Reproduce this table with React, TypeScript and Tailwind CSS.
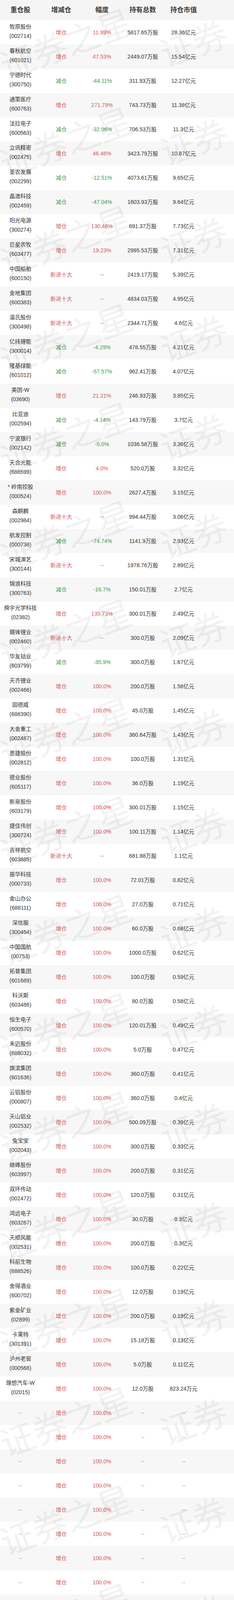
import React from 'react';

type Row = [string, string, string, string, string, string];

const rows: Row[] = [
  ['牧原股份', '002714', '增仓', '11.99%', '5817.65万股', '28.36亿元'],
  ['春秋航空', '601021', '增仓', '47.53%', '2449.07万股', '15.54亿元'],
  ['宁德时代', '300750', '减仓', '-44.11%', '311.93万股', '12.27亿元'],
  ['通策医疗', '600763', '增仓', '271.79%', '743.73万股', '11.38亿元'],
  ['法拉电子', '600563', '减仓', '-32.96%', '706.53万股', '11.3亿元'],
  ['立讯精密', '002475', '增仓', '46.46%', '3423.79万股', '10.87亿元'],
  ['圣农发展', '002299', '减仓', '-12.51%', '4073.61万股', '9.65亿元'],
  ['晶澳科技', '002459', '减仓', '-47.04%', '1603.93万股', '9.64亿元'],
  ['阳光电源', '300274', '增仓', '130.46%', '691.37万股', '7.73亿元'],
  ['巨星农牧', '603477', '增仓', '19.23%', '2995.53万股', '7.31亿元'],
  ['中国船舶', '600150', '新进十大', '--', '2419.17万股', '5.39亿元'],
  ['金地集团', '600383', '新进十大', '--', '4834.03万股', '4.95亿元'],
  ['温氏股份', '300498', '新进十大', '--', '2344.71万股', '4.6亿元'],
  ['亿纬锂能', '300014', '减仓', '-4.29%', '478.55万股', '4.21亿元'],
  ['隆基绿能', '601012', '减仓', '-57.57%', '962.41万股', '4.07亿元'],
  ['美团-W', '03690', '增仓', '21.21%', '246.93万股', '3.85亿元'],
  ['比亚迪', '002594', '减仓', '-4.14%', '143.79万股', '3.7亿元'],
  ['宁波银行', '002142', '减仓', '-5.0%', '1036.58万股', '3.36亿元'],
  ['天合光能', '688599', '增仓', '4.0%', '520.0万股', '3.32亿元'],
  ['* 岭南控股', '000524', '增仓', '100.0%', '2627.4万股', '3.15亿元'],
  ['森麒麟', '002984', '新进十大', '--', '994.44万股', '3.06亿元'],
  ['航发控制', '000738', '减仓', '-74.74%', '1141.9万股', '2.93亿元'],
  ['宋城演艺', '300144', '新进十大', '--', '1978.76万股', '2.89亿元'],
  ['锦浪科技', '300763', '减仓', '-16.7%', '150.01万股', '2.7亿元'],
  ['舜宇光学科技', '02382', '增仓', '135.73%', '300.01万股', '2.49亿元'],
  ['赣锋锂业', '002460', '新进十大', '--', '300.0万股', '2.09亿元'],
  ['华友钴业', '603799', '减仓', '-35.9%', '300.0万股', '1.67亿元'],
  ['天齐锂业', '002466', '增仓', '100.0%', '200.0万股', '1.58亿元'],
  ['固德威', '688390', '增仓', '100.0%', '45.0万股', '1.45亿元'],
  ['大金重工', '002487', '增仓', '100.0%', '360.64万股', '1.43亿元'],
  ['恩捷股份', '002812', '增仓', '100.0%', '100.0万股', '1.31亿元'],
  ['德业股份', '605117', '增仓', '100.0%', '36.0万股', '1.19亿元'],
  ['新泉股份', '603179', '增仓', '100.0%', '300.01万股', '1.15亿元'],
  ['捷佳伟创', '300724', '增仓', '100.0%', '100.11万股', '1.14亿元'],
  ['吉祥航空', '603885', '新进十大', '--', '681.88万股', '1.1亿元'],
  ['振华科技', '000733', '增仓', '100.0%', '72.01万股', '0.82亿元'],
  ['金山办公', '688111', '增仓', '100.0%', '27.0万股', '0.71亿元'],
  ['深信服', '300454', '增仓', '100.0%', '60.0万股', '0.68亿元'],
  ['中国国航', '00753', '增仓', '100.0%', '1000.0万股', '0.62亿元'],
  ['拓普集团', '601689', '增仓', '100.0%', '100.0万股', '0.59亿元'],
  ['科沃斯', '603486', '增仓', '100.0%', '80.0万股', '0.58亿元'],
  ['恒生电子', '600570', '增仓', '100.0%', '120.01万股', '0.49亿元'],
  ['禾迈股份', '688032', '增仓', '100.0%', '5.0万股', '0.47亿元'],
  ['旗滨集团', '601636', '增仓', '100.0%', '360.0万股', '0.41亿元'],
  ['云铝股份', '000807', '增仓', '100.0%', '360.0万股', '0.4亿元'],
  ['天山铝业', '002532', '增仓', '100.0%', '500.09万股', '0.39亿元'],
  ['兔宝宝', '002043', '增仓', '100.0%', '300.0万股', '0.33亿元'],
  ['继峰股份', '603997', '增仓', '100.0%', '200.0万股', '0.31亿元'],
  ['双环传动', '002472', '增仓', '100.0%', '120.0万股', '0.31亿元'],
  ['鸿远电子', '603267', '增仓', '100.0%', '30.0万股', '0.3亿元'],
  ['天顺风能', '002531', '增仓', '100.0%', '200.0万股', '0.3亿元'],
  ['科前生物', '688526', '增仓', '100.0%', '100.0万股', '0.22亿元'],
  ['舍得酒业', '600702', '增仓', '100.0%', '12.0万股', '0.19亿元'],
  ['紫金矿业', '02899', '增仓', '100.0%', '200.0万股', '0.19亿元'],
  ['卡莱特', '301391', '增仓', '100.0%', '15.18万股', '0.13亿元'],
  ['泸州老窖', '000568', '增仓', '100.0%', '5.0万股', '0.11亿元'],
  ['理想汽车-W', '02015', '增仓', '100.0%', '12.0万股', '823.24万元'],
];

// lower part of the table could not be read; keep the row rhythm with the visible action pattern
const unread: string[] = [
  ...Array.from({ length: 49 }, () => '增仓'),
  '不变',
  '不变',
  ...Array.from({ length: 6 }, () => '退出十大'),
];

const headers = ['重仓股', '增减仓', '幅度', '持有总数', '持仓市值'];

function tone(action: string) {
  if (action === '减仓') return 'text-[#3b9c52]';
  if (action === '不变') return 'text-[#333]';
  return 'text-[#d25a5a]';
}

export default function App() {
  return (
    <div className="relative h-[7192px] w-[600px] overflow-hidden bg-white font-['Liberation_Sans','Noto_Sans_CJK_SC',sans-serif] text-[#333]">
      <div className="flex h-[52px] bg-[#f5f5f5]">
        <div className="grid w-[523px] grid-cols-5 items-center text-center text-[17px] font-bold text-[#3a3a3a]">
          {headers.map((h) => (
            <div key={h}>{h}</div>
          ))}
        </div>
      </div>

      {rows.map(([name, code, action, pct, shares, value], i) => (
        <div key={code + name} className={`flex h-[62px] ${i % 2 ? 'bg-[#f7f7f7]' : 'bg-white'}`}>
          <div className="grid w-[523px] grid-cols-5 items-center text-center text-[14px]">
            <div className="pb-[6px] leading-[24px]">
              <div>{name}</div>
              <div>({code})</div>
            </div>
            <div className={tone(action)}>{action}</div>
            <div className={tone(action)}>{pct}</div>
            <div>{shares}</div>
            <div>{value}</div>
          </div>
        </div>
      ))}

      {unread.map((action, j) => {
        const i = rows.length + j;
        return (
          <div key={i} className={`flex h-[62px] ${i % 2 ? 'bg-[#f7f7f7]' : 'bg-white'}`}>
            <div className="grid w-[523px] grid-cols-5 items-center text-center text-[14px] text-[#999]">
              <div>--</div>
              <div className={tone(action)}>{action}</div>
              <div className={action === '增仓' ? tone(action) : ''}>{action === '增仓' ? '100.0%' : '--'}</div>
              <div>--</div>
              <div>--</div>
            </div>
          </div>
        );
      })}

      {/* watermark */}
      <div aria-hidden className="pointer-events-none absolute inset-x-0 top-[-11px] bottom-0 select-none overflow-hidden">
        <div className="flex w-[600px] flex-wrap">
          {Array.from({ length: 56 }).map((_, i) => (
            <div
              key={i}
              className={`flex h-[252px] items-center overflow-hidden ${i % 2 ? 'w-[200px] justify-start pl-[10px]' : 'w-[400px] justify-center pr-[60px]'}`}
            >
              <span className="rotate-[-20deg] whitespace-nowrap text-[88px] font-normal text-black/[0.05]">
                {i % 2 ? '证券' : '证券之星'}
              </span>
            </div>
          ))}
        </div>
      </div>
    </div>
  );
}
